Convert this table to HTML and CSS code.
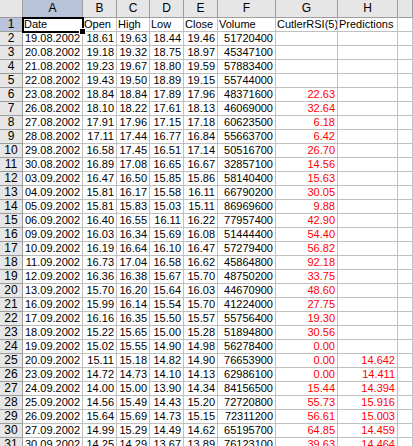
FILE: index.html
```html
<!DOCTYPE html>
<html>
<head>
<meta charset="utf-8">
<link rel="stylesheet" href="styles.css">
</head>
<body>
<div class="sheet" id="sheet">
  <div class="corner"></div>
  <div class="ch sel">A</div><div class="ch">B</div><div class="ch">C</div><div class="ch">D</div><div class="ch">E</div><div class="ch">F</div><div class="ch">G</div><div class="ch">H</div><div class="ch last"></div>

  <div class="rh sel">1</div>
  <div class="c l active">Date<span class="handle"></span></div><div class="c l">Open</div><div class="c l">High</div><div class="c l">Low</div><div class="c l">Close</div><div class="c l">Volume</div><div class="c l">CutlerRSI(5)</div><div class="c l">Predictions</div><div class="c"></div>
</div>
<script src="data.js"></script>
</body>
</html>
```
FILE: data.js
```js
const rows = [
["19.08.2002","18.61","19.63","18.44","19.46","51720400","",""],
["20.08.2002","19.18","19.32","18.75","18.97","45347100","",""],
["21.08.2002","19.23","19.67","18.80","19.59","57883400","",""],
["22.08.2002","19.43","19.50","18.89","19.15","55744000","",""],
["23.08.2002","18.84","18.84","17.89","17.96","48371600","22.63",""],
["26.08.2002","18.10","18.22","17.61","18.13","46069000","32.64",""],
["27.08.2002","17.91","17.96","17.15","17.18","60623500","6.18",""],
["28.08.2002","17.11","17.44","16.77","16.84","55663700","6.42",""],
["29.08.2002","16.58","17.45","16.51","17.14","50516700","26.70",""],
["30.08.2002","16.89","17.08","16.65","16.67","32857100","14.56",""],
["03.09.2002","16.47","16.50","15.85","15.86","58140400","15.63",""],
["04.09.2002","15.81","16.17","15.58","16.11","66790200","30.05",""],
["05.09.2002","15.81","15.83","15.03","15.11","86969600","9.88",""],
["06.09.2002","16.40","16.55","16.11","16.22","77957400","42.90",""],
["09.09.2002","16.03","16.34","15.69","16.08","51444400","54.40",""],
["10.09.2002","16.19","16.64","16.10","16.47","57279400","56.82",""],
["11.09.2002","16.73","17.04","16.58","16.62","45864800","92.18",""],
["12.09.2002","16.36","16.38","15.67","15.70","48750200","33.75",""],
["13.09.2002","15.70","16.20","15.64","16.03","44670900","48.60",""],
["16.09.2002","15.99","16.14","15.54","15.70","41224000","27.75",""],
["17.09.2002","16.16","16.35","15.50","15.57","55756400","19.30",""],
["18.09.2002","15.22","15.65","15.00","15.28","51894800","30.56",""],
["19.09.2002","15.02","15.55","14.90","14.98","56278400","0.00",""],
["20.09.2002","15.11","15.18","14.82","14.90","76653900","0.00","14.642"],
["23.09.2002","14.72","14.73","14.10","14.13","62986100","0.00","14.411"],
["24.09.2002","14.00","15.00","13.90","14.34","84156500","15.44","14.394"],
["25.09.2002","14.56","15.49","14.43","15.20","72720800","55.73","15.916"],
["26.09.2002","15.64","15.69","14.73","15.15","72311200","56.61","15.003"],
["27.09.2002","14.99","15.29","14.49","14.62","65195700","64.85","14.459"],
["30.09.2002","14.25","14.29","13.67","13.89","76123100","39.63","14.464"]
];
const sheet = document.getElementById("sheet");
let html = "";
rows.forEach((r, i) => {
  html += '<div class="rh">' + (i + 2) + '</div>';
  r.forEach((v, j) => {
    const red = j >= 6 ? " red" : "";
    html += '<div class="c' + red + '">' + v + '</div>';
  });
  html += '<div class="c"></div>';
});
sheet.insertAdjacentHTML("beforeend", html);
```
FILE: styles.css
```css
html, body {
  margin: 0;
  padding: 0;
  background: #ffffff;
  overflow: hidden;
}
.sheet {
  display: grid;
  grid-template-columns: 23px 60px 34px 33px 34px 34px 58px 62px 60px 1fr;
  grid-auto-rows: 14px;
  grid-template-rows: 18px;
  font-family: "Liberation Sans", Arial, sans-serif;
  font-size: 11px;
  line-height: 13px;
  color: #000;
  width: 100%;
}
.corner, .ch, .rh {
  background: #e6e6e6;
  border-right: 1px solid #9d9d9d;
  border-bottom: 1px solid #9d9d9d;
  box-sizing: border-box;
  text-align: center;
  color: #000;
}
.ch {
  font-size: 12px;
  line-height: 17px;
}
.rh {
  font-size: 12px;
}
.ch.sel, .rh.sel {
  background: #b9c3d9;
}
.c {
  border-right: 1px solid #c0c0c0;
  border-bottom: 1px solid #c0c0c0;
  box-sizing: border-box;
  text-align: right;
  padding: 0 2px 0 2px;
  white-space: nowrap;
  overflow: hidden;
}
.c.l {
  text-align: left;
  padding-left: 1px;
}
.red {
  color: #ff0000;
}
.active {
  position: relative;
  overflow: visible;
  outline: 2px solid #000;
  outline-offset: -1px;
  z-index: 2;
}
.handle {
  position: absolute;
  right: -4px;
  bottom: -4px;
  width: 5px;
  height: 5px;
  background: #000;
  border: 1px solid #fff;
}
```
